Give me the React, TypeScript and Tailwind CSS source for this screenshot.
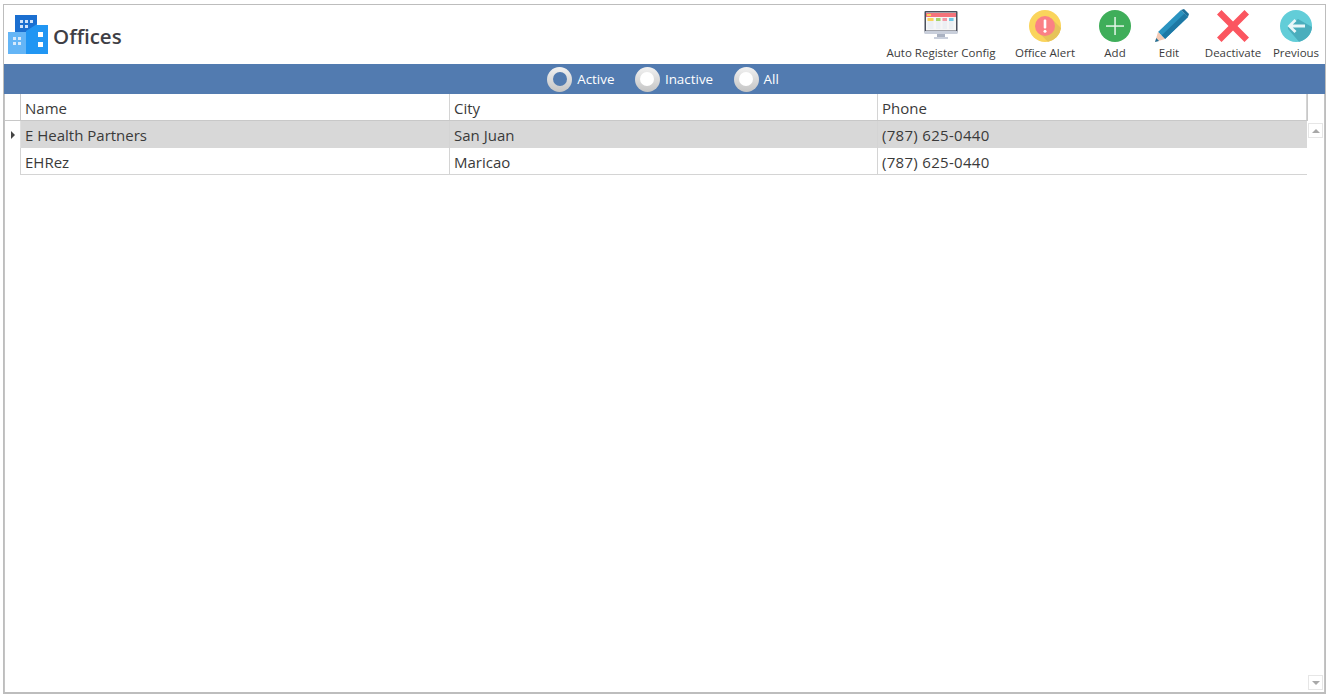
const font = { fontFamily: '"Open Sans", "Noto Sans", sans-serif' };

function LogoIcon() {
  return (
    <svg width="40" height="39" viewBox="0 0 40 39">
      <rect x="7" y="0" width="22" height="20" fill="#1b6fd0" />
      <rect x="12" y="5" width="3" height="3" fill="#cfe3fa" />
      <rect x="17" y="5" width="3" height="3" fill="#cfe3fa" />
      <rect x="22" y="5" width="3" height="3" fill="#cfe3fa" />
      <rect x="12" y="10" width="3" height="3" fill="#cfe3fa" />
      <rect x="17" y="10" width="3" height="3" fill="#cfe3fa" />
      <rect x="29" y="10" width="11" height="29" fill="#2196f3" />
      <rect x="18" y="16" width="12" height="23" fill="#2196f3" />
      <path d="M18 16 29 9v7z" fill="#2196f3" />
      <rect x="0" y="17" width="18" height="22" fill="#64b5f6" />
      <rect x="5" y="22" width="3" height="3" fill="#d6e9fb" />
      <rect x="10" y="22" width="3" height="3" fill="#d6e9fb" />
      <rect x="5" y="27" width="3" height="3" fill="#d6e9fb" />
      <rect x="10" y="27" width="3" height="3" fill="#d6e9fb" />
      <rect x="30" y="17" width="5" height="5" fill="#fff" />
      <rect x="30" y="27" width="5" height="5" fill="#fff" />
    </svg>
  );
}

function MonitorIcon() {
  return (
    <svg width="34" height="32" viewBox="0 0 34 32">
      <rect x="0.5" y="1" width="33" height="22" rx="1" fill="#4a4f5c" />
      <rect x="2" y="2.5" width="30" height="18" fill="#f6f6f6" />
      <rect x="2" y="3" width="30" height="4" fill="#f4737b" />
      <rect x="3" y="4" width="4" height="2" fill="#fad25a" />
      <rect x="3.5" y="8" width="6" height="11" fill="#eceff3" />
      <rect x="3.5" y="8" width="6" height="3" fill="#fad25a" />
      <rect x="12" y="8" width="4.5" height="11" fill="#eceff3" />
      <rect x="12" y="8" width="4.5" height="3" fill="#a4d46a" />
      <rect x="18.5" y="8" width="4.5" height="11" fill="#eceff3" />
      <rect x="18.5" y="8" width="4.5" height="3" fill="#f497a4" />
      <rect x="25" y="8" width="4.5" height="11" fill="#eceff3" />
      <rect x="25" y="8" width="4.5" height="3" fill="#6ec6e6" />
      <rect x="0.5" y="21" width="33" height="3" fill="#c9cfdb" />
      <rect x="13" y="24" width="8" height="3" fill="#aab2c2" />
      <rect x="10" y="27" width="14" height="2" fill="#c9cfdb" />
    </svg>
  );
}

function AlertIcon() {
  return (
    <svg width="32" height="32" viewBox="0 0 32 32">
      <circle cx="16" cy="16" r="16" fill="#fad45c" />
      <path d="M22 8 32 18A16 16 0 0 1 19 31.7L9 22z" fill="#e6c35a" />
      <circle cx="16" cy="16" r="10" fill="#fb8085" />
      <rect x="14.7" y="9.5" width="2.6" height="9" rx="1" fill="#fff" />
      <circle cx="16" cy="21.3" r="1.5" fill="#fff" />
    </svg>
  );
}

function AddIcon() {
  return (
    <svg width="32" height="32" viewBox="0 0 32 32">
      <circle cx="16" cy="16" r="16" fill="#3fae5a" />
      <rect x="15.3" y="7" width="1.5" height="18" fill="#e4f5e8" />
      <rect x="7" y="15.3" width="18" height="1.5" fill="#e4f5e8" />
    </svg>
  );
}

function EditIcon() {
  return (
    <svg className="ml-[6px]" width="34" height="33" viewBox="0 0 34 33">
      <path d="M26 1 33 8 10 30 3 23z" fill="#2a93c0" />
      <path d="M29.5 4.5 33 8 10 30 6.5 26.5z" fill="#1d78a4" />
      <path d="M26 1 29 0 34 5 33 8z" fill="#1d6f98" />
      <path d="M3 23 10 30 0 33z" fill="#f3c9b4" />
      <path d="M1.3 29 4 32 0 33z" fill="#1d6f98" />
    </svg>
  );
}

function XIcon() {
  return (
    <svg width="32" height="32" viewBox="0 0 32 32">
      <path d="M4.5 0 16 11.5 27.5 0 32 4.5 20.5 16 32 27.5 27.5 32 16 20.5 4.5 32 0 27.5 11.5 16 0 4.5z" fill="#fb5660" />
    </svg>
  );
}

function BackIcon() {
  return (
    <svg width="32" height="32" viewBox="0 0 32 32">
      <circle cx="16" cy="16" r="16" fill="#62cdd8" />
      <path d="M8 16 18 9 32 17A16 16 0 0 1 19 31.7L8 19z" fill="#4aaebd" />
      <path d="M7.5 16 14.5 9 16.5 11 12.8 14.6H25V17.4H12.8L16.5 21 14.5 23z" fill="#e8f7f9" />
    </svg>
  );
}

function Tool({ icon, label, width }: { icon: React.ReactNode; label: string; width: string }) {
  return (
    <div className={`flex flex-col items-center ${width}`}>
      <div className="flex h-[34px] items-center justify-center">{icon}</div>
      <span className="mt-[2px] text-[11.5px] leading-[16px] whitespace-nowrap text-[#3c3c3c]">{label}</span>
    </div>
  );
}

function Radio({ label, checked }: { label: string; checked?: boolean }) {
  return (
    <div className="flex items-center gap-[5px]">
      <div className="flex h-[25px] w-[25px] items-center justify-center rounded-full bg-gradient-to-b from-[#f2f2f2] to-[#c4c4c4]">
        <div className={checked ? "h-[14px] w-[14px] rounded-full bg-[#527bb0]" : "h-[14px] w-[14px] rounded-full bg-white"} />
      </div>
      <span className="pt-[1px] text-[13.4px] text-white">{label}</span>
    </div>
  );
}

function Cell({ children, last, digits }: { children?: React.ReactNode; last?: boolean; digits?: boolean }) {
  return (
    <div
      className={`flex items-center pt-[2px] pl-[4px] text-[15px] text-[#3a3a3a] ${digits ? "tracking-[0.3px]" : ""} ${
        last ? "" : "border-r border-[#d4d4d4]"
      }`}
    >
      {children}
    </div>
  );
}

export default function App() {
  const cols = "grid grid-cols-[429px_428px_429px]";
  return (
    <div className="h-[696px] w-[1329px] bg-white pt-[4px] pr-[3px] pb-[2px] pl-[3px]" style={font}>
      <div className="flex h-full flex-col border border-b-2 border-[#bdbdbd]">
        <div className="flex h-[59px] items-center justify-between">
          <div className="flex items-center gap-[5px] pl-[4px]">
            <LogoIcon />
            <span className="pt-[3px] text-[20.5px] font-semibold text-[#3f3f46]">Offices</span>
          </div>
          <div className="flex pr-[2px]">
            <Tool icon={<MonitorIcon />} label="Auto Register Config" width="w-[120px]" />
            <Tool icon={<AlertIcon />} label="Office Alert" width="w-[88px]" />
            <Tool icon={<AddIcon />} label="Add" width="w-[52px]" />
            <Tool icon={<EditIcon />} label="Edit" width="w-[56px]" />
            <Tool icon={<XIcon />} label="Deactivate" width="w-[72px]" />
            <Tool icon={<BackIcon />} label="Previous" width="w-[54px]" />
          </div>
        </div>
        <div className="flex h-[30px] items-center justify-center gap-[20.5px] bg-[#527bb0] pr-[3px]">
          <Radio label="Active" checked />
          <Radio label="Inactive" />
          <Radio label="All" />
        </div>
        <div className="flex min-h-0 flex-1 border-x border-[#c4c4c4]">
          <div className="flex flex-1 flex-col">
            <div className="flex h-[27px] border-b border-[#c8c8c8]">
              <div className="w-[16px] border-r border-[#c8c8c8]" />
              <div className={`${cols} flex-1`}>
                <Cell>Name</Cell>
                <Cell>City</Cell>
                <Cell>Phone</Cell>
              </div>
              <div className="w-[1px] bg-[#c8c8c8]" />
            </div>
            <div className="flex h-[27px]">
              <div className="flex w-[16px] items-center justify-center border-r border-[#e0e0e0]">
                <div className="h-0 w-0 border-y-[4px] border-l-[4px] border-y-transparent border-l-[#444]" />
              </div>
              <div className={`${cols} flex-1 bg-[#d8d8d8]`}>
                <Cell>E Health Partners</Cell>
                <Cell>San Juan</Cell>
                <Cell last digits>(787) 625-0440</Cell>
              </div>
              <div className="w-[1px]" />
            </div>
            <div className="flex h-[27px]">
              <div className="w-[16px] border-r border-[#d4d4d4]" />
              <div className={`${cols} flex-1 border-b border-[#d4d4d4]`}>
                <Cell>EHRez</Cell>
                <Cell>Maricao</Cell>
                <Cell last digits>(787) 625-0440</Cell>
              </div>
              <div className="w-[1px]" />
            </div>
          </div>
          <div className="flex w-[16px] flex-col justify-between pt-[27px] pb-[2px]">
            <div className="mt-[2px] flex h-[15px] w-[15px] items-center justify-center border border-[#e6e6e6]">
              <div className="h-0 w-0 border-x-[4px] border-b-[4px] border-x-transparent border-b-[#a8a8a8]" />
            </div>
            <div className="flex h-[15px] w-[15px] items-center justify-center border border-[#e6e6e6]">
              <div className="h-0 w-0 border-x-[4px] border-t-[4px] border-x-transparent border-t-[#a8a8a8]" />
            </div>
          </div>
        </div>
      </div>
    </div>
  );
}
